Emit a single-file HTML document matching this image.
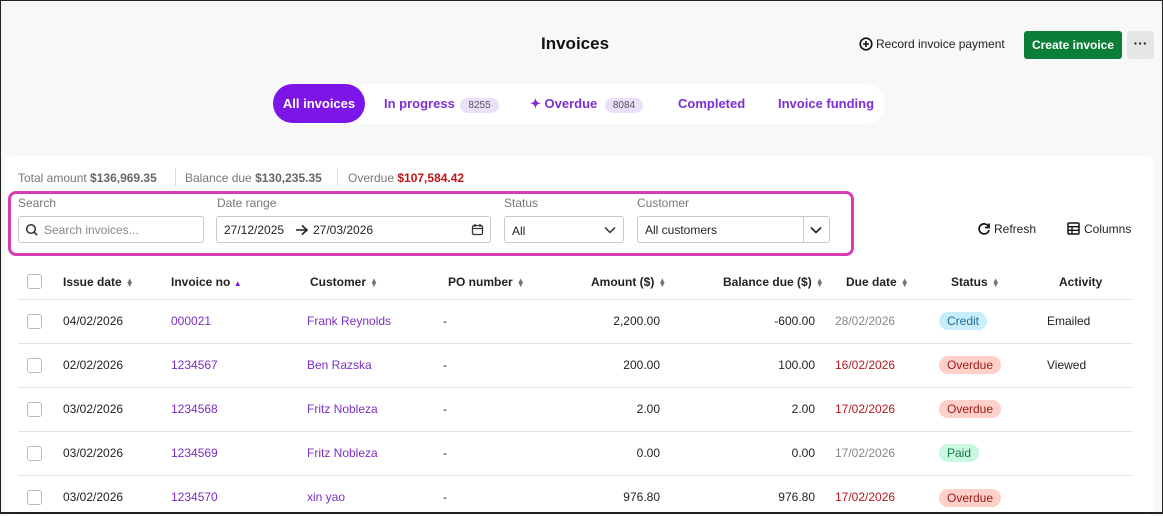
<!DOCTYPE html>
<html><head><meta charset="utf-8"><style>
*{box-sizing:border-box;margin:0;padding:0}
body{width:1163px;height:514px;overflow:hidden;background:#f8f8f8;font-family:"Liberation Sans",sans-serif;font-size:12px;color:#222;position:relative}
.frame{position:absolute;inset:0;border:1px solid #222;border-bottom:2px solid #222;pointer-events:none;z-index:9}
.a{position:absolute;white-space:nowrap}
.card{position:absolute;left:5px;top:156px;width:1149px;height:360px;background:#fff;border-radius:6px}
.lbl{color:#777;font-size:12px}
.inp{position:absolute;height:27px;border:1px solid #c9c9c9;border-radius:3px;background:#fff}
.th{font-weight:bold;font-size:12px;color:#222}
.sort{display:inline-block;color:#777;font-size:8px;line-height:4px;vertical-align:middle;margin-left:4px}
.line{position:absolute;left:18px;width:1115px;height:1px;background:#e4e4e4}
.cb{position:absolute;left:27px;width:15px;height:15px;border:1px solid #bbb;border-radius:3px;background:#fff}
.p{color:#7a2fc4}
.r{text-align:right}
.red{color:#b3191f}
.g{color:#888}
.badge{position:absolute;height:18px;line-height:18px;padding:0 8px;border-radius:9px;font-size:12px}
.ov{background:#ffcfc9;color:#9a1a18}
.cr{background:#c8eefc;color:#1f6c96}
.pd{background:#c9f7e0;color:#1a7a49}
</style></head><body>
<div class="frame"></div>
<div class="a" style="left:541px;top:34px;font-size:17px;font-weight:bold;color:#111">Invoices</div>
<div class="a" style="left:859px;top:37px;font-size:12px;color:#222"><svg width="14" height="14" viewBox="0 0 14 14" style="vertical-align:-3px;margin-right:3px"><circle cx="7" cy="7" r="5.8" fill="none" stroke="#111" stroke-width="1.6"/><path d="M7 4v6M4 7h6" stroke="#111" stroke-width="1.6"/></svg>Record invoice payment</div>
<div class="a" style="left:1024px;top:31px;width:98px;height:28px;background:#0b7f3a;border-radius:3px;color:#fff;font-weight:bold;font-size:12px;line-height:28px;text-align:center">Create invoice</div>
<div class="a" style="left:1127px;top:31px;width:27px;height:28px;background:#e6e6e6;border-radius:3px;text-align:center;line-height:24px;font-weight:bold;font-size:14px">···</div>
<div class="a" style="left:273px;top:84px;width:612px;height:40px;background:#fff;border-radius:20px"></div>
<div class="a" style="left:273px;top:84px;width:92px;height:39px;background:#7c15e8;border-radius:20px;color:#fff;font-weight:bold;font-size:13px;line-height:39px;text-align:center">All invoices</div>
<div class="a p" style="left:384px;top:96px;font-weight:bold;font-size:13px;color:#7c2fd6">In progress <span style="display:inline-block;background:#ecdffb;color:#555;font-weight:normal;font-size:10px;border-radius:8px;padding:2px 8px;margin-left:2px">8255</span></div>
<div class="a p" style="left:530px;top:96px;font-weight:bold;font-size:13px;color:#7c2fd6">✦ Overdue <span style="display:inline-block;background:#ecdffb;color:#555;font-weight:normal;font-size:10px;border-radius:8px;padding:2px 8px;margin-left:4px">8084</span></div>
<div class="a" style="left:678px;top:96px;font-weight:bold;font-size:13px;color:#7c2fd6">Completed</div>
<div class="a" style="left:778px;top:96px;font-weight:bold;font-size:13px;color:#7c2fd6">Invoice funding</div>

<div class="card"></div>
<div class="a" style="left:18px;top:171px;color:#777">Total amount <b style="color:#666">$136,969.35</b></div>
<div class="a" style="left:175px;top:168px;width:1px;height:18px;background:#ddd"></div>
<div class="a" style="left:185px;top:171px;color:#777">Balance due <b style="color:#666">$130,235.35</b></div>
<div class="a" style="left:337px;top:168px;width:1px;height:18px;background:#ddd"></div>
<div class="a" style="left:348px;top:171px;color:#777">Overdue <b style="color:#c0141a">$107,584.42</b></div>

<div class="a" style="left:8px;top:191px;width:846px;height:65px;border:3px solid #d63cb4;border-radius:8px"></div>
<div class="a lbl" style="left:18px;top:196px">Search</div>
<div class="inp" style="left:18px;top:216px;width:186px"><svg width="14" height="14" viewBox="0 0 14 14" style="position:absolute;left:6px;top:6px"><circle cx="6" cy="6" r="4.3" fill="none" stroke="#333" stroke-width="1.5"/><path d="M9.2 9.2l3 3" stroke="#333" stroke-width="1.5"/></svg><span class="a" style="left:25px;top:6px;color:#888">Search invoices...</span></div>
<div class="a lbl" style="left:217px;top:196px">Date range</div>
<div class="inp" style="left:216px;top:216px;width:275px"><span class="a" style="left:7px;top:6px;color:#222">27/12/2025</span><svg width="14" height="12" viewBox="0 0 14 12" style="position:absolute;left:78px;top:7px"><path d="M1 6h11M7 1.5l5 4.5-5 4.5" fill="none" stroke="#222" stroke-width="1.6"/></svg><span class="a" style="left:96px;top:6px;color:#222">27/03/2026</span><svg width="13" height="13" viewBox="0 0 13 13" style="position:absolute;left:254px;top:6px"><rect x="1.5" y="2.5" width="10" height="9" rx="1.5" fill="none" stroke="#333" stroke-width="1.3"/><path d="M1.5 5.5h10M4 1v3M9 1v3" stroke="#333" stroke-width="1.3"/></svg></div>
<div class="a lbl" style="left:504px;top:196px">Status</div>
<div class="inp" style="left:504px;top:216px;width:120px"><span class="a" style="left:7px;top:7px">All</span><svg width="12" height="8" viewBox="0 0 12 8" style="position:absolute;left:99px;top:9px"><path d="M1 1.5l5 5 5-5" fill="none" stroke="#333" stroke-width="1.5"/></svg></div>
<div class="a lbl" style="left:637px;top:196px">Customer</div>
<div class="inp" style="left:637px;top:216px;width:193px"><span class="a" style="left:7px;top:6px">All customers</span><div class="a" style="left:165px;top:0;width:1px;height:25px;background:#ccc"></div><svg width="12" height="8" viewBox="0 0 12 8" style="position:absolute;left:172px;top:9px"><path d="M1 1.5l5 5 5-5" fill="none" stroke="#222" stroke-width="1.6"/></svg></div>
<div class="a" style="left:977px;top:222px"><svg width="14" height="14" viewBox="0 0 14 14" style="vertical-align:-3px;margin-right:3px"><path d="M11.5 4.5A5 5 0 1 0 12 8" fill="none" stroke="#111" stroke-width="1.7"/><path d="M12 1.5v4h-4" fill="none" stroke="#111" stroke-width="1.7"/></svg>Refresh</div>
<div class="a" style="left:1067px;top:222px"><svg width="13" height="13" viewBox="0 0 13 13" style="vertical-align:-2px;margin-right:4px"><rect x="1" y="1" width="11" height="11" rx="1" fill="none" stroke="#111" stroke-width="1.5"/><path d="M1 4.7h11M1 8.3h11M5 4.7v7.3" stroke="#111" stroke-width="1.3"/></svg>Columns</div>

<div class="cb" style="top:274px"></div>
<div class="a th" style="left:63px;top:275px">Issue date<span class="sort">▲<br>▼</span></div>
<div class="a th" style="left:171px;top:275px">Invoice no <span style="color:#7c15e8;font-size:8px">▲</span></div>
<div class="a th" style="left:310px;top:275px">Customer<span class="sort">▲<br>▼</span></div>
<div class="a th" style="left:448px;top:275px">PO number<span class="sort">▲<br>▼</span></div>
<div class="a th" style="left:591px;top:275px">Amount ($)<span class="sort">▲<br>▼</span></div>
<div class="a th" style="left:723px;top:275px">Balance due ($)<span class="sort">▲<br>▼</span></div>
<div class="a th" style="left:846px;top:275px">Due date<span class="sort">▲<br>▼</span></div>
<div class="a th" style="left:951px;top:275px">Status<span class="sort">▲<br>▼</span></div>
<div class="a th" style="left:1059px;top:275px">Activity</div>
<div class="line" style="top:299px"></div>

<div class="cb" style="top:314px"></div>
<div class="a" style="left:63px;top:314px">04/02/2026</div>
<div class="a p" style="left:171px;top:314px">000021</div>
<div class="a p" style="left:307px;top:314px">Frank Reynolds</div>
<div class="a" style="left:443px;top:314px">-</div>
<div class="a r" style="right:503px;top:314px">2,200.00</div>
<div class="a r" style="right:348px;top:314px">-600.00</div>
<div class="a g" style="left:835px;top:314px">28/02/2026</div>
<div class="badge cr" style="left:939px;top:312px">Credit</div>
<div class="a" style="left:1047px;top:314px">Emailed</div>
<div class="line" style="top:343px"></div>

<div class="cb" style="top:358px"></div>
<div class="a" style="left:63px;top:358px">02/02/2026</div>
<div class="a p" style="left:171px;top:358px">1234567</div>
<div class="a p" style="left:307px;top:358px">Ben Razska</div>
<div class="a" style="left:443px;top:358px">-</div>
<div class="a r" style="right:503px;top:358px">200.00</div>
<div class="a r" style="right:348px;top:358px">100.00</div>
<div class="a red" style="left:835px;top:358px">16/02/2026</div>
<div class="badge ov" style="left:939px;top:356px">Overdue</div>
<div class="a" style="left:1047px;top:358px">Viewed</div>
<div class="line" style="top:387px"></div>

<div class="cb" style="top:402px"></div>
<div class="a" style="left:63px;top:402px">03/02/2026</div>
<div class="a p" style="left:171px;top:402px">1234568</div>
<div class="a p" style="left:307px;top:402px">Fritz Nobleza</div>
<div class="a" style="left:443px;top:402px">-</div>
<div class="a r" style="right:503px;top:402px">2.00</div>
<div class="a r" style="right:348px;top:402px">2.00</div>
<div class="a red" style="left:835px;top:402px">17/02/2026</div>
<div class="badge ov" style="left:939px;top:400px">Overdue</div>
<div class="line" style="top:431px"></div>

<div class="cb" style="top:446px"></div>
<div class="a" style="left:63px;top:446px">03/02/2026</div>
<div class="a p" style="left:171px;top:446px">1234569</div>
<div class="a p" style="left:307px;top:446px">Fritz Nobleza</div>
<div class="a" style="left:443px;top:446px">-</div>
<div class="a r" style="right:503px;top:446px">0.00</div>
<div class="a r" style="right:348px;top:446px">0.00</div>
<div class="a g" style="left:835px;top:446px">17/02/2026</div>
<div class="badge pd" style="left:939px;top:444px">Paid</div>
<div class="line" style="top:475px"></div>

<div class="cb" style="top:490px"></div>
<div class="a" style="left:63px;top:490px">03/02/2026</div>
<div class="a p" style="left:171px;top:490px">1234570</div>
<div class="a p" style="left:307px;top:490px">xin yao</div>
<div class="a" style="left:443px;top:490px">-</div>
<div class="a r" style="right:503px;top:490px">976.80</div>
<div class="a r" style="right:348px;top:490px">976.80</div>
<div class="a red" style="left:835px;top:490px">17/02/2026</div>
<div class="badge ov" style="left:939px;top:489px">Overdue</div>
</body></html>
